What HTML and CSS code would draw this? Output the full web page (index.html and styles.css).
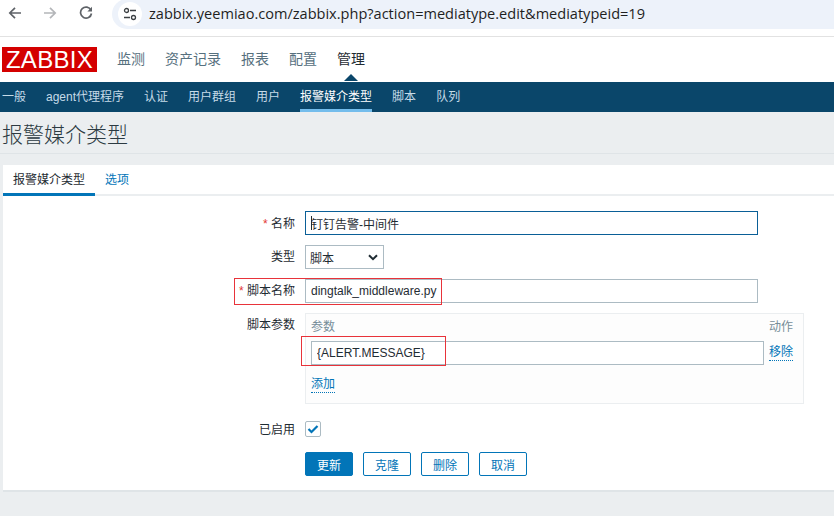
FILE: index.html
```html
<!DOCTYPE html>
<html lang="en">
<head>
    <meta charset="UTF-8">
    <title>报警媒介类型</title>
    <link rel="stylesheet" href="styles.css">
</head>
<body>
    <div class="browser-bar">
        <svg class="tool-icon back" viewBox="0 0 14 14"><path d="M13 7H2M7 1.800L1.800 7L7 12.200" fill="none" stroke="#5f6368" stroke-width="1.700"/></svg>
        <svg class="tool-icon forward" viewBox="0 0 14 14"><path d="M1 7H12M7 1.800L12.200 7L7 12.200" fill="none" stroke="#b4b6b9" stroke-width="1.700"/></svg>
        <svg class="tool-icon reload" viewBox="0 0 14 14"><path d="M12 4.200A5.500 5.500 0 1 0 12.500 7.500" fill="none" stroke="#5f6368" stroke-width="1.700"/><path d="M13 0.800V5.400H8.400Z" fill="#5f6368"/></svg>
        <div class="address">
            <span class="site-info">
                <svg viewBox="0 0 14 14" width="14" height="14"><circle cx="3.500" cy="3.500" r="2" fill="none" stroke="#3c4043" stroke-width="1.300"/><path d="M7 3.500H13M1 10.500H7" stroke="#3c4043" stroke-width="1.300"/><circle cx="10.500" cy="10.500" r="2" fill="none" stroke="#3c4043" stroke-width="1.300"/></svg>
            </span>
            <span class="url">zabbix.yeemiao.com/zabbix.php?action=mediatype.edit&amp;mediatypeid=19</span>
        </div>
    </div>

    <header class="top-nav">
        <div class="logo">ZABBIX</div>
        <a>监测</a>
        <a>资产记录</a>
        <a>报表</a>
        <a>配置</a>
        <a class="active">管理</a>
    </header>

    <nav class="sub-nav">
        <a>一般</a>
        <a>agent代理程序</a>
        <a>认证</a>
        <a>用户群组</a>
        <a>用户</a>
        <a class="active">报警媒介类型</a>
        <a>脚本</a>
        <a>队列</a>
    </nav>

    <h1 class="page-title">报警媒介类型</h1>

    <main class="card">
        <div class="tabs">
            <a class="tab active">报警媒介类型</a>
            <a class="tab">选项</a>
        </div>
        <form class="form">
            <label class="form-label name-label"><span class="req">*</span> 名称</label>
            <div class="input-wrap focused"><input class="text-input wide" type="text" value="钉钉告警-中间件"></div>

            <label class="form-label">类型</label>
            <div class="select-box">
                <span>脚本</span>
                <svg viewBox="0 0 10 7" width="10" height="7"><path d="M1 1.200L5 5.200L9 1.200" fill="none" stroke="#1f2c33" stroke-width="2"/></svg>
            </div>

            <label class="form-label"><span class="req">*</span> 脚本名称</label>
            <div class="input-wrap"><input class="text-input wide" type="text" value="dingtalk_middleware.py"></div>

            <label class="form-label">脚本参数</label>
            <div class="params">
                <div class="params-head"><span>参数</span><span>动作</span></div>
                <div class="param-row">
                    <input class="text-input" type="text" value="{ALERT.MESSAGE}">
                    <a class="dotted">移除</a>
                </div>
                <a class="dotted add-link">添加</a>
            </div>

            <label class="form-label enabled-label">已启用</label>
            <div class="checkbox-row">
                <span class="checkbox">
                    <svg viewBox="0 0 12 10" width="12" height="10"><path d="M1.500 5L4.500 8L10.500 2" fill="none" stroke="#0275b8" stroke-width="2.200"/></svg>
                </span>
            </div>

            <div class="buttons">
                <button type="button" class="btn primary">更新</button>
                <button type="button" class="btn">克隆</button>
                <button type="button" class="btn">删除</button>
                <button type="button" class="btn">取消</button>
            </div>
        </form>
    </main>

    <div class="mark mark-script"></div>
    <div class="mark mark-param"></div>
</body>
</html>
```

FILE: styles.css
```css
* {
    box-sizing: border-box;
}
html, body {
    height: 100%;
}
body {
    margin: 0;
    position: relative;
    overflow: hidden;
    background: #ebeef0;
    color: #1f2c33;
    font-family: 'Liberation Sans', 'Noto Sans CJK SC', sans-serif;
    font-size: 12px;
}

/* browser chrome */
.browser-bar {
    height: 37px;
    background: #fff;
    border-bottom: 1px solid #e2e2e2;
    display: flex;
    align-items: flex-start;
    padding-left: 8px;
}
.tool-icon {
    width: 14px;
    height: 14px;
    margin-top: 6px;
    flex: none;
}
.forward { margin-left: 21px; }
.reload { margin-left: 22px; }
.address {
    margin-left: 19px;
    flex: 1;
    height: 30px;
    background: #edf2fa;
    border-radius: 15px 0 0 15px;
    display: flex;
    align-items: center;
    padding-left: 6px;
    margin-top: -1px;
}
.site-info {
    width: 24px;
    height: 24px;
    border-radius: 50%;
    background: #fff;
    display: flex;
    align-items: center;
    justify-content: center;
    flex: none;
}
.url {
    margin-left: 7px;
    margin-bottom: 3px;
    font-family: 'Open Sans', sans-serif;
    font-size: 14.56px;
    color: #1f1f1f;
    white-space: nowrap;
}

/* zabbix header */
.top-nav {
    height: 45px;
    background: #fff;
    display: flex;
    align-items: center;
    padding-left: 2px;
    position: relative;
    font-size: 14px;
}
.logo {
    width: 95px;
    height: 25px;
    background: #d40000;
    color: #fff;
    font-size: 24px;
    line-height: 25px;
    text-align: center;
    letter-spacing: 0.3px;
    margin-right: 20px;
}
.top-nav a {
    color: #56707e;
    margin-right: 20px;
    margin-bottom: 3px;
}
.top-nav a.active {
    color: #1f2c33;
    position: relative;
}
.top-nav a.active::after {
    content: "";
    position: absolute;
    left: 7px;
    top: 26px;
    border-left: 7px solid transparent;
    border-right: 7px solid transparent;
    border-bottom: 7px solid #0a466a;
}
.sub-nav {
    height: 30px;
    background: #0a466a;
    display: flex;
    padding-left: 2px;
    gap: 20px;
}
.sub-nav a {
    color: #c6dbe8;
    line-height: 30px;
    height: 30px;
}
.sub-nav a.active {
    color: #fff;
    border-bottom: 3px solid #74bdec;
}

.page-title {
    margin: 0;
    height: 42px;
    border-bottom: 1px solid #dfe4e7;
    font-size: 21px;
    font-weight: 300;
    line-height: 46px;
    padding-left: 2px;
    color: #2c3a42;
}

/* card */
.card {
    margin: 11px 0 0 3px;
    height: 327px;
    background: #fff;
    border-bottom: 2px solid #dfe4e7;
}
.tabs {
    height: 31px;
    display: flex;
    border-bottom: 2px solid #ebeef0;
}
.tab {
    height: 31px;
    line-height: 31px;
    padding: 0 10px;
    color: #0275b8;
}
.tab.active {
    color: #1f2c33;
    border-bottom: 3px solid #0275b8;
}
.form {
    display: grid;
    grid-template-columns: 292px auto;
    column-gap: 10px;
    row-gap: 10px;
    padding-top: 15px;
    align-items: start;
    justify-content: start;
}
.form-label {
    text-align: right;
    line-height: 24px;
}
.name-label {
    height: 24px;
    padding-top: 1px;
}
.req {
    color: #e33734;
}
.text-input {
    height: 24px;
    border: 1px solid #acbbc3;
    padding: 0 5px;
    font: inherit;
    color: #1f2c33;
    background: #fff;
    outline: none;
    border-radius: 0;
    display: block;
}
.wide {
    width: 453px;
}
.input-wrap {
    position: relative;
}
.focused .text-input {
    border-color: #0a5f97;
}
.focused::before {
    content: "";
    position: absolute;
    left: 6px;
    top: 5px;
    width: 1px;
    height: 14px;
    background: #1f2c33;
}
.select-box {
    width: 79px;
    height: 24px;
    border: 1px solid #acbbc3;
    display: flex;
    align-items: center;
    justify-content: space-between;
    padding: 0 5px 0 4px;
}
.params {
    width: 499px;
    height: 91px;
    border: 1px solid #ebeef0;
    background: #fdfdfd;
    padding: 6px 5px 5px;
}
.params-head {
    display: flex;
    justify-content: space-between;
    color: #768d99;
    line-height: 14px;
    height: 21px;
    padding: 0 5px 0 0;
}
.param-row {
    display: flex;
    align-items: center;
    gap: 5px;
    height: 24px;
}
.param-row .text-input {
    width: 453px;
}
.dotted {
    color: #0275b8;
    border-bottom: 1px dotted #0275b8;
    line-height: 15px;
}
.add-link {
    display: inline-block;
    margin-top: 12px;
}
.enabled-label {
    margin-top: 4px;
}
.checkbox-row {
    height: 24px;
    display: flex;
    align-items: center;
    margin-top: 3px;
}
.checkbox {
    width: 16px;
    height: 16px;
    border: 1px solid #acbbc3;
    border-radius: 2px;
    display: flex;
    align-items: center;
    justify-content: center;
}
.buttons {
    grid-column: 2;
    display: flex;
    gap: 10px;
}
.btn {
    width: 48px;
    height: 24px;
    border: 1px solid #0275b8;
    border-radius: 2px;
    background: #fff;
    color: #0275b8;
    font: inherit;
    padding: 0;
}
.btn.primary {
    background: #0275b8;
    color: #fff;
}

/* red annotation boxes drawn over the screenshot */
.mark {
    position: absolute;
    border: 1px solid #e8333a;
}
.mark-script {
    left: 234px;
    top: 278px;
    width: 208px;
    height: 27px;
}
.mark-param {
    left: 301px;
    top: 336px;
    width: 145px;
    height: 30px;
}
```
